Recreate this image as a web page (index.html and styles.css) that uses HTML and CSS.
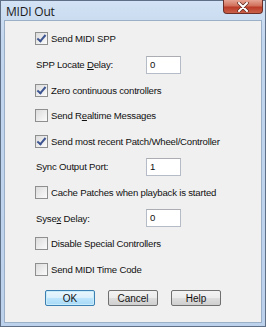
FILE: index.html
```html
<!DOCTYPE html>
<html>
<head>
  <title>MIDI Out</title>
<link rel="stylesheet" href="styles.css">
</head>
<body>
  <div class="window">
    <div class="titlebar">
      <span class="title">MIDI Out</span>
      <div class="close">
        <svg width="14" height="10" viewBox="0 0 14 10">
          <path d="M3 1 L11 9 M11 1 L3 9" stroke="#5a2a22" stroke-width="3.4" stroke-linecap="round"/>
          <path d="M3 1 L11 9 M11 1 L3 9" stroke="#ffffff" stroke-width="2" stroke-linecap="round"/>
        </svg>
      </div>
    </div>
    <div class="client">
      <div class="rows">
        <div class="row"><span class="chk on"></span><span class="lbl">Send MIDI SPP</span></div>
        <div class="row field"><span class="lbl">SPP Locate <u>D</u>elay:</span><div class="edit">0</div></div>
        <div class="row"><span class="chk on"></span><span class="lbl">Zero continuous controllers</span></div>
        <div class="row"><span class="chk"></span><span class="lbl">Send R<u>e</u>altime Messages</span></div>
        <div class="row"><span class="chk on"></span><span class="lbl">Send most recent Patch/Wheel/Controller</span></div>
        <div class="row field"><span class="lbl">Sync Output Port:</span><div class="edit">1</div></div>
        <div class="row"><span class="chk"></span><span class="lbl">Cache Patches when playback is started</span></div>
        <div class="row field"><span class="lbl">Syse<u>x</u> Delay:</span><div class="edit">0</div></div>
        <div class="row"><span class="chk"></span><span class="lbl">Disable Special Controllers</span></div>
        <div class="row"><span class="chk"></span><span class="lbl">Send MIDI Time Code</span></div>
      </div>
      <div class="buttons">
        <button class="btn default">OK</button>
        <button class="btn">Cancel</button>
        <button class="btn">Help</button>
      </div>
    </div>
  </div>
</body>
</html>
```

FILE: styles.css
```css
body {
  margin: 0;
  font-family: "Liberation Sans", Arial, sans-serif;
}
.window {
  width: 266px;
  height: 327px;
  box-sizing: border-box;
  border: 1px solid #5e6f86;
  background: linear-gradient(#d3e2f4, #c2d6ee 40px, #bcd1ec);
  display: flex;
  flex-direction: column;
}
.titlebar {
  height: 19px;
  display: flex;
  justify-content: space-between;
  align-items: flex-start;
}
.title {
  font-family: "Open Sans", "DejaVu Sans", sans-serif;
  font-size: 12px;
  letter-spacing: -0.2px;
  color: #1a1a1a;
  padding: 2px 0 0 5px;
}
.close {
  width: 40px;
  height: 14px;
  margin: -1px 2px 0 0;
  box-sizing: border-box;
  border: 1px solid #6b2f27;
  border-top: none;
  border-radius: 0 0 4px 4px;
  background: linear-gradient(#e6a493, #d0705b 45%, #bb3c28 55%, #c9604a);
  display: flex;
  align-items: center;
  justify-content: center;
}
.client {
  flex: 1;
  margin: 0 3px 3px 3px;
  border: 1px solid #9bafc6;
  background: #f0f0f0;
  font-size: 9.6px;
  letter-spacing: -0.2px;
  color: #111;
}
.rows {
  padding: 5.2px 0 0 30px;
}
.row {
  height: 25.6px;
  display: flex;
  align-items: center;
}
.chk {
  width: 11px;
  height: 11px;
  border: 1px solid #8e8f8f;
  background: linear-gradient(135deg, #dcdcdc, #fbfbfb);
  margin-right: 3px;
  position: relative;
}
.chk.on::after {
  content: "";
  position: absolute;
  left: 3px;
  top: 0px;
  width: 3px;
  height: 7px;
  border: solid #3d5591;
  border-width: 0 2px 2px 0;
  transform: rotate(40deg);
}
.lbl u {
  text-decoration: underline;
}
.field .lbl {
  width: 110px;
  padding-left: 1px;
}
.edit {
  width: 30px;
  height: 16px;
  border: 1px solid #b5bcc7;
  border-top-color: #abadb3;
  background: #fff;
  padding-left: 3px;
  line-height: 16px;
}
.buttons {
  display: flex;
  gap: 13px;
  padding: 8px 0 0 40px;
}
.btn {
  width: 50px;
  height: 16px;
  padding: 0;
  font-family: "Liberation Sans", Arial, sans-serif;
  font-size: 10px;
  color: #111;
  border: 1px solid #707070;
  border-radius: 2px;
  background: linear-gradient(#f2f2f2, #ebebeb 50%, #dddddd 51%, #cfcfcf);
}
.btn.default {
  border-color: #3c7fb1;
  background: linear-gradient(#eaf6fd, #d9f0fc 50%, #bee6fd 51%, #a7d9f5);
  box-shadow: inset 0 0 0 1px #c9ecfb;
}
```
